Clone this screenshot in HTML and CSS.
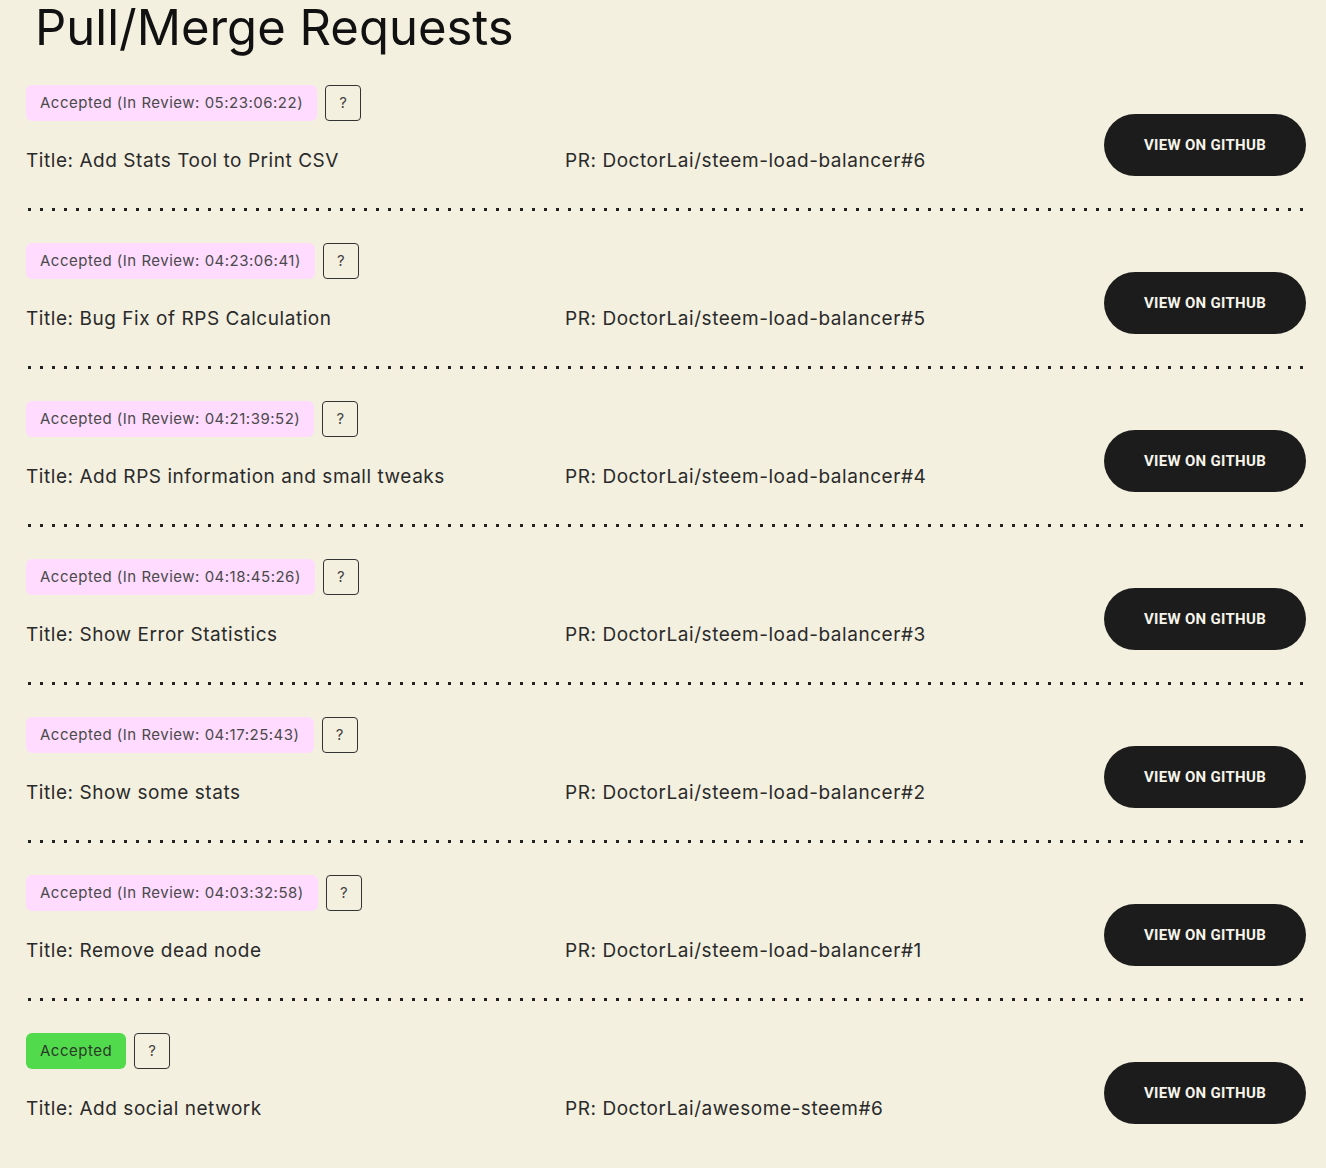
FILE: index.html
```html
<!DOCTYPE html>
<html lang="en">
<head>
  <meta charset="UTF-8">
  <meta name="viewport" content="width=device-width, initial-scale=1.0">
  <title>Pull/Merge Requests</title>
  <link rel="stylesheet" href="styles.css">
</head>
<body>

  <h1 class="page-title">Pull/Merge Requests</h1>

  <div class="pr-list">

    <div class="pr-item">
      <div class="pr-info">
        <div class="pr-status">
          <span class="badge badge-review">Accepted (In Review: 05:23:06:22)</span>
          <span class="help-box">?</span>
        </div>
        <div class="pr-meta">
          <span>Title: Add Stats Tool to Print CSV</span>
          <span>PR: DoctorLai/steem-load-balancer#6</span>
        </div>
      </div>
      <a class="github-btn" href="#">View on GitHub</a>
    </div>
    <div class="pr-sep"></div>

    <div class="pr-item">
      <div class="pr-info">
        <div class="pr-status">
          <span class="badge badge-review">Accepted (In Review: 04:23:06:41)</span>
          <span class="help-box">?</span>
        </div>
        <div class="pr-meta">
          <span>Title: Bug Fix of RPS Calculation</span>
          <span>PR: DoctorLai/steem-load-balancer#5</span>
        </div>
      </div>
      <a class="github-btn" href="#">View on GitHub</a>
    </div>
    <div class="pr-sep"></div>

    <div class="pr-item">
      <div class="pr-info">
        <div class="pr-status">
          <span class="badge badge-review">Accepted (In Review: 04:21:39:52)</span>
          <span class="help-box">?</span>
        </div>
        <div class="pr-meta">
          <span>Title: Add RPS information and small tweaks</span>
          <span>PR: DoctorLai/steem-load-balancer#4</span>
        </div>
      </div>
      <a class="github-btn" href="#">View on GitHub</a>
    </div>
    <div class="pr-sep"></div>

    <div class="pr-item">
      <div class="pr-info">
        <div class="pr-status">
          <span class="badge badge-review">Accepted (In Review: 04:18:45:26)</span>
          <span class="help-box">?</span>
        </div>
        <div class="pr-meta">
          <span>Title: Show Error Statistics</span>
          <span>PR: DoctorLai/steem-load-balancer#3</span>
        </div>
      </div>
      <a class="github-btn" href="#">View on GitHub</a>
    </div>
    <div class="pr-sep"></div>

    <div class="pr-item">
      <div class="pr-info">
        <div class="pr-status">
          <span class="badge badge-review">Accepted (In Review: 04:17:25:43)</span>
          <span class="help-box">?</span>
        </div>
        <div class="pr-meta">
          <span>Title: Show some stats</span>
          <span>PR: DoctorLai/steem-load-balancer#2</span>
        </div>
      </div>
      <a class="github-btn" href="#">View on GitHub</a>
    </div>
    <div class="pr-sep"></div>

    <div class="pr-item">
      <div class="pr-info">
        <div class="pr-status">
          <span class="badge badge-review">Accepted (In Review: 04:03:32:58)</span>
          <span class="help-box">?</span>
        </div>
        <div class="pr-meta">
          <span>Title: Remove dead node</span>
          <span>PR: DoctorLai/steem-load-balancer#1</span>
        </div>
      </div>
      <a class="github-btn" href="#">View on GitHub</a>
    </div>
    <div class="pr-sep"></div>

    <div class="pr-item">
      <div class="pr-info">
        <div class="pr-status">
          <span class="badge badge-accepted">Accepted</span>
          <span class="help-box">?</span>
        </div>
        <div class="pr-meta">
          <span>Title: Add social network</span>
          <span>PR: DoctorLai/awesome-steem#6</span>
        </div>
      </div>
      <a class="github-btn" href="#">View on GitHub</a>
    </div>

  </div>

</body>
</html>
```

FILE: styles.css
```css
body {
  margin: 0;
  background: #f3f0e0;
  color: #222;
  font-family: Inter, "Noto Sans", sans-serif;
}
.page-title {
  margin: 0 0 0 35px;
  font-size: 49px;
  font-weight: 400;
  line-height: 56px;
  color: #111;
}
.pr-list {
  margin-top: 29px;
  padding: 0 20px 0 26px;
}
.pr-item {
  display: flex;
  align-items: center;
  justify-content: space-between;
}
.pr-info {
  flex: 1;
}
.pr-status {
  display: flex;
  align-items: center;
  gap: 8px;
}
.badge {
  height: 36px;
  line-height: 36px;
  padding: 0 14px;
  border-radius: 6px;
  font-size: 15px;
  letter-spacing: 0.5px;
  color: #4a4a4a;
}
.badge-review {
  background: #ffdbff;
}
.badge-accepted {
  background: #52da4d;
  color: #2a3a28;
}
.help-box {
  box-sizing: border-box;
  width: 36px;
  height: 36px;
  line-height: 34px;
  text-align: center;
  border: 1px solid #333;
  border-radius: 4px;
  font-size: 15px;
  color: #444;
}
.pr-meta {
  display: grid;
  grid-template-columns: 539px 1fr;
  margin: 28px 0 32px;
  font-size: 19px;
  line-height: 24px;
  letter-spacing: 0.55px;
  color: #2a2a2a;
}
.github-btn {
  width: 202px;
  height: 62px;
  line-height: 62px;
  border-radius: 31px;
  background: #1c1c1c;
  color: #f6f4ea;
  text-align: center;
  text-decoration: none;
  text-transform: uppercase;
  font-family: Roboto, "Liberation Sans", sans-serif;
  font-weight: 700;
  font-size: 15px;
  letter-spacing: 0.3px;
}
/* dotted rule between the requests */
.pr-sep {
  height: 3px;
  margin: 3px 0 32px 2px;
  background-image: linear-gradient(to right, #222 3px, transparent 3px);
  background-size: 12px 3px;
}
```
